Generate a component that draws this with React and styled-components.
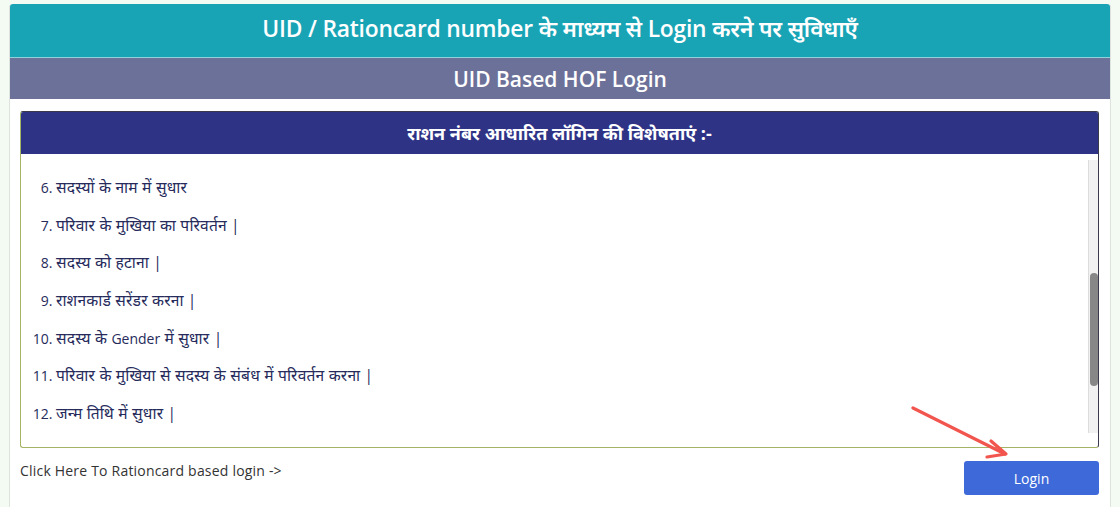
import React from 'react';
import styled, { createGlobalStyle } from 'styled-components';

const GlobalStyle = createGlobalStyle`
  html, body {
    margin: 0;
    padding: 0;
    background-color: #f3fbf3;
  }
  body {
    font-family: 'Open Sans', 'Noto Sans', 'Noto Sans Devanagari', 'Lohit Devanagari', sans-serif;
  }
`;

const Page = styled.div`
  width: 1120px;
  height: 507px;
  overflow: hidden;
  padding: 4px 9px 0 9px;
  box-sizing: border-box;
`;

const Panel = styled.div`
  position: relative;
  background-color: #ffffff;
  border-left: 1px solid #dfe3df;
  border-right: 1px solid #dfe3df;
  border-radius: 3px 3px 0 0;
  height: 520px;
`;

const TitleBar = styled.div`
  height: 54px;
  box-sizing: border-box;
  padding-bottom: 5px;
  display: flex;
  align-items: center;
  justify-content: center;
  background-color: #19a4b6;
  border-radius: 3px 3px 0 0;
  border-bottom: 1px solid #8ed3db;
  color: #ffffff;
  font-size: 22.8px;
  font-weight: 600;
  letter-spacing: -0.2px;
`;

const SubBar = styled.div`
  height: 41px;
  display: flex;
  align-items: center;
  justify-content: center;
  background-color: #6c7199;
  color: #ffffff;
  font-size: 21px;
  font-weight: 600;
`;

const Body = styled.div`
  padding: 12px 11px 0 10px;
`;

const Card = styled.div`
  height: 335px;
  display: flex;
  flex-direction: column;
  border: 1px solid #3a3a4a;
  border-left-color: #a4b465;
  border-bottom-color: #a4b465;
  border-radius: 3px;
  overflow: hidden;
`;

const CardHeader = styled.div`
  height: 42px;
  flex: none;
  display: flex;
  align-items: center;
  justify-content: center;
  background-color: #2e3386;
  color: #ffffff;
  font-size: 18px;
  font-weight: 700;
`;

const CardBody = styled.div`
  flex: 1;
  display: flex;
  padding: 6px 0 14px 0;
`;

const List = styled.ol`
  flex: 1;
  margin: 0;
  padding: 9px 0 0 35px;
  list-style: decimal;
  color: #262b5c;
  font-size: 14px;
  font-weight: 500;
`;

const Item = styled.li`
  height: 37.7px;
  line-height: 36px;
  &::marker {
    content: counter(list-item) '. ';
  }
`;

const Hindi = styled.span`
  font-size: 15.6px;
  font-weight: 400;
  letter-spacing: 0.2px;
`;

const Track = styled.div`
  width: 9px;
  flex: none;
  background-color: #f1f1f1;
  border-left: 1px solid #dcdcdc;
  display: flex;
  flex-direction: column;
  align-items: center;
`;

const Thumb = styled.div`
  width: 8px;
  border-radius: 4px;
  background-color: #878787;
  margin-top: ${({ offset }) => offset}px;
  height: ${({ size }) => size}px;
`;

const Footer = styled.div`
  display: flex;
  justify-content: space-between;
  align-items: flex-start;
  padding-top: 12px;
`;

const RationLink = styled.a`
  font-size: 14px;
  color: #333333;
  text-decoration: none;
  letter-spacing: 0.2px;
  margin-top: 1px;
  cursor: pointer;
`;

const LoginButton = styled.button`
  width: 135px;
  height: 34px;
  margin-top: 1px;
  border: none;
  border-radius: 3px;
  background-color: #3d69d9;
  color: #ffffff;
  font-family: inherit;
  font-size: 14px;
  cursor: pointer;
`;

const Pointer = styled.svg`
  position: absolute;
  left: 884px;
  top: 392px;
  pointer-events: none;
`;

// mixed lines: latin words keep the base size
const features = [
  ['सदस्यों के नाम में सुधार'],
  ['परिवार के मुखिया का परिवर्तन |'],
  ['सदस्य को हटाना |'],
  ['राशनकार्ड सरेंडर करना |'],
  ['सदस्य के ', 'Gender', ' में सुधार |'],
  ['परिवार के मुखिया से सदस्य के संबंध में परिवर्तन करना |'],
  ['जन्म तिथि में सुधार |']
];

const App = () => (
  <>
    <GlobalStyle />
    <Page>
      <Panel>
        <TitleBar>UID / Rationcard number के माध्यम से Login करने पर सुविधाएँ</TitleBar>
        <SubBar>UID Based HOF Login</SubBar>
        <Body>
          <Card>
            <CardHeader>राशन नंबर आधारित लॉगिन की विशेषताएं :-</CardHeader>
            <CardBody>
              <List start={6}>
                {features.map(parts => (
                  <Item key={parts.join('')}>
                    {parts.map((part, i) =>
                      i === 1 ? part : <Hindi key={part}>{part}</Hindi>
                    )}
                  </Item>
                ))}
              </List>
              <Track>
                <Thumb offset={113} size={113} />
              </Track>
            </CardBody>
          </Card>
          <Footer>
            <RationLink>Click Here To Rationcard based login -&gt;</RationLink>
            <LoginButton type="button">Login</LoginButton>
          </Footer>
        </Body>
        <Pointer width="120" height="66" viewBox="0 0 120 66">
          <g stroke="#f2554e" strokeWidth="3.2" strokeLinecap="round" fill="none">
            <line x1="19" y1="12" x2="111" y2="58" />
            <polyline points="97,45 112,58 93,61" strokeLinejoin="round" />
          </g>
        </Pointer>
      </Panel>
    </Page>
  </>
);

export default App;
